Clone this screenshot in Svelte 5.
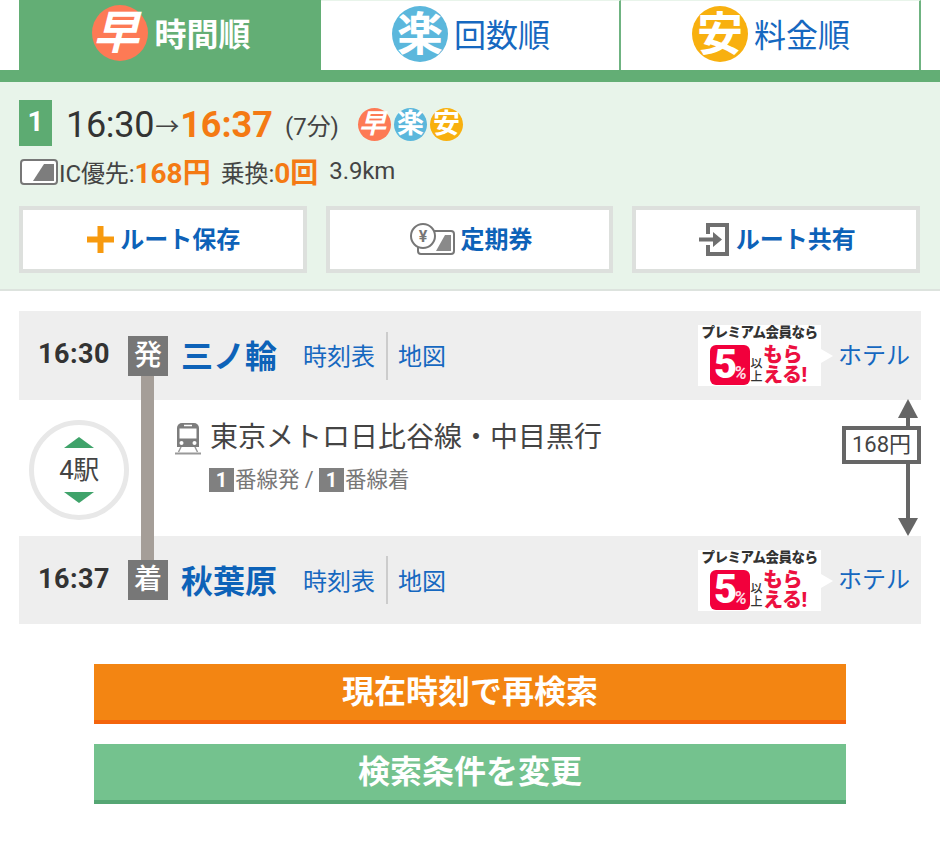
<script>
  const tabs = [
    { key: 'haya', g: '早', label: '時間順', on: true },
    { key: 'raku', g: '楽', label: '回数順' },
    { key: 'yasu', g: '安', label: '料金順' }
  ];
  const stops = [
    { time: '16:30', kind: '発', name: '三ノ輪' },
    { time: '16:37', kind: '着', name: '秋葉原' }
  ];
</script>

{#snippet ad()}
  <div class="ad">
    <div class="ad-top">プレミアム会員なら</div>
    <div class="ad-main">
      <span class="ad-five">5<small>%</small></span>
      <span class="ad-ijo">以<br />上</span>
      <span class="ad-red">もら<br />える!</span>
    </div>
  </div>
{/snippet}

{#snippet stop(s)}
  <div class="stop">
    <span class="stop-time">{s.time}</span>
    <span class="stop-kind">{s.kind}</span>
    <a class="stop-name">{s.name}</a>
    <a class="stop-link">時刻表</a>
    <span class="stop-div"></span>
    <a class="stop-link map">地図</a>
    <span class="stop-right">
      {@render ad()}
      <a class="stop-link hotel">ホテル</a>
    </span>
  </div>
{/snippet}

<div class="page">
  <div class="tabs">
    {#each tabs as t}
      <div class="tab" class:on={t.on}>
        <span class="coin big {t.key}"><span>{t.g}</span></span>
        <span class="tab-label">{t.label}</span>
      </div>
    {/each}
  </div>

  <section class="summary">
    <div class="row1">
      <span class="num">1</span>
      <span class="dep">16:30</span><span class="arrow">→</span><span class="arr">16:37</span>
      <span class="dur">(7分)</span>
      <span class="coins">
        {#each tabs as t}<span class="coin small {t.key}"><span>{t.g}</span></span>{/each}
      </span>
    </div>
    <div class="row2">
      <svg class="card" width="38" height="26" viewBox="0 0 38 26">
        <rect x="1" y="1" width="36" height="24" rx="3" fill="#fff" stroke="#777" stroke-width="2" />
        <path d="M13 22 L24 5 H34 V22 Z" fill="#7d7d7d" />
      </svg>
      <span class="lbl">IC優先:</span><b class="hi">168円</b>
      <span class="lbl transfer">乗換:</span><b class="hi">0回</b>
      <span class="lbl dist">3.9km</span>
    </div>
    <div class="actions">
      <button>
        <svg width="27" height="27" viewBox="0 0 27 27"><path d="M10.500 0h6v10.500h10.500v6H16.500v10.500h-6V16.500H0v-6h10.500z" fill="#f79a0f" /></svg>
        <span>ルート保存</span>
      </button>
      <button>
        <svg width="46" height="32" viewBox="0 0 46 32">
          <rect x="9" y="8" width="36" height="23" rx="3" fill="#fff" stroke="#777" stroke-width="2" />
          <path d="M27 28 L36 12 H42 V28 Z" fill="#8a8a8a" />
          <circle cx="14" cy="13" r="12" fill="#fff" stroke="#777" stroke-width="2" />
          <text x="14" y="19" class="yen">¥</text>
        </svg>
        <span>定期券</span>
      </button>
      <button>
        <svg width="31" height="33" viewBox="0 0 31 33">
          <path d="M7 0h23v33H7v-11h4v7h15V4h-15v7H7z" fill="#6f6f6f" />
          <path d="M0 14.500h14V9l9 7.500-9 7.500v-5.500H0z" fill="#6f6f6f" />
        </svg>
        <span>ルート共有</span>
      </button>
    </div>
  </section>

  <section class="route">
    <span class="track"></span>
    {@render stop(stops[0])}
    <div class="leg">
      <div class="count">
        <span class="tri up"></span>
        <span class="count-num">4駅</span>
        <span class="tri down"></span>
      </div>
      <div class="leg-info">
        <div class="line">
          <svg width="26" height="33" viewBox="0 0 26 33">
            <path d="M7 1h12a5 5 0 0 1 5 5v19H2V6a5 5 0 0 1 5-5z" fill="#7d7d7d" />
            <path d="M4.500 6.500h17v10h-17z" fill="#fff" />
            <path d="M9 3.500h8" stroke="#fff" stroke-width="1.500" />
            <circle cx="6.500" cy="21" r="2" fill="#fff" /><circle cx="19.500" cy="21" r="2" fill="#fff" />
            <path d="M6 25l-2.500 5M20 25l2.500 5" stroke="#999" stroke-width="1.500" />
            <path d="M0 31.500h26" stroke="#999" stroke-width="2" />
          </svg>
          <span>東京メトロ日比谷線・中目黒行</span>
        </div>
        <div class="plat">
          <span class="pnum">1</span>番線発 / <span class="pnum">1</span>番線着
        </div>
      </div>
      <div class="fare">
        <span class="head up"></span>
        <span class="shaft short"></span>
        <span class="fare-box">168円</span>
        <span class="shaft long"></span>
        <span class="head down"></span>
      </div>
    </div>
    {@render stop(stops[1])}
  </section>

  <div class="cta">
    <button class="orange">現在時刻で再検索</button>
    <button class="green">検索条件を変更</button>
  </div>
</div>

<style>
  :global(body) {
    margin: 0;
    background: #fff;
  }
  .page {
    width: 940px;
    font-family: Roboto, "Noto Sans CJK JP", sans-serif;
    color: #333;
  }
  button {
    font-family: inherit;
    cursor: pointer;
  }

  .tabs {
    display: flex;
    height: 70px;
    padding: 0 19px;
  }
  .tab {
    width: 300px;
    box-sizing: border-box;
    display: flex;
    align-items: center;
    justify-content: center;
    gap: 6px;
    padding: 0 0 4px 2px;
    font-size: 32px;
    color: #1668c0;
    background: #fff;
    border-top: 1px solid #e8f4ea;
    border-right: 2px solid #6fb381;
  }
  .tab.on {
    width: 302px;
    background: #63ae75;
    border: 0;
    color: #fff;
    font-weight: 700;
    padding-left: 3px;
  }
  .tab-label {
    margin-bottom: 2px;
  }
  .coin {
    display: inline-flex;
    align-items: center;
    justify-content: center;
    border-radius: 50%;
    color: #fff;
    font-weight: 700;
    flex: none;
  }
  .coin.big {
    width: 56px;
    height: 56px;
    font-size: 46px;
    line-height: 1;
  }
  .coin.small {
    width: 33px;
    height: 33px;
    font-size: 27px;
    line-height: 1;
  }
  .haya {
    background: #fd7a55;
  }
  .haya > span {
    display: block;
    transform: skewX(-14deg);
  }
  .raku {
    background: #5bb7dc;
  }
  .yasu {
    background: #f8b00f;
  }

  .summary {
    border-top: 12px solid #63ae75;
    border-bottom: 2px solid #dde3de;
    background: #e8f4ea;
    padding: 18px 20px 0 19px;
    height: 189px;
  }
  .row1 {
    display: flex;
    align-items: center;
    height: 46px;
  }
  .num {
    width: 33px;
    height: 46px;
    background: #5dab72;
    color: #fff;
    font-size: 28px;
    font-weight: 700;
    line-height: 44px;
    text-align: center;
    margin-right: 14px;
  }
  .dep {
    font-size: 36px;
    letter-spacing: -0.3px;
    margin-top: 3px;
  }
  .arrow {
    font-size: 24px;
    color: #444;
    width: 26px;
    text-align: center;
    margin-top: 3px;
  }
  .arr {
    font-size: 36px;
    font-weight: 700;
    color: #f47a14;
    margin-top: 3px;
  }
  .dur {
    font-size: 24px;
    margin: 3px 0 0 12px;
    width: 73px;
    color: #444;
  }
  .coins {
    display: flex;
    gap: 3px;
    margin-top: 2px;
  }
  .row2 {
    display: flex;
    align-items: center;
    height: 36px;
    margin-top: 7px;
    font-size: 24px;
    color: #444;
  }
  .card {
    margin: 1px 1px 0 1px;
  }
  .lbl {
    letter-spacing: -0.1px;
  }
  .hi {
    font-size: 28px;
    color: #f47a14;
    margin: -1px 0 0 0;
  }
  .transfer {
    margin-left: 10px;
  }
  .dist {
    margin-left: 11px;
  }
  .actions {
    display: flex;
    gap: 19px;
    margin-top: 17px;
  }
  .actions button {
    width: 288px;
    height: 67px;
    box-sizing: border-box;
    border: 4px solid #dde0dd;
    background: #fff;
    color: #0d62b8;
    font-size: 24px;
    font-weight: 700;
    display: flex;
    align-items: center;
    justify-content: center;
    gap: 6px;
    padding: 0 0 0 2px;
  }
  .actions button span {
    margin-bottom: 5px;
  }
  .actions svg {
    margin-bottom: 1px;
  }
  .yen {
    font-size: 16px;
    font-weight: 700;
    fill: #777;
    text-anchor: middle;
  }

  .route {
    position: relative;
    margin: 20px 19px 0;
    width: 902px;
  }
  .track {
    position: absolute;
    left: 122px;
    top: 60px;
    width: 13px;
    height: 190px;
    background: #a59e98;
  }
  .stop {
    height: 89px;
    background: #eee;
    display: flex;
    align-items: center;
    padding: 0 11px 0 19px;
    box-sizing: border-box;
  }
  .stop:last-child {
    height: 88px;
  }
  .stop-time {
    width: 90px;
    font-size: 27px;
    font-weight: 700;
    letter-spacing: 0.5px;
    flex: none;
    margin-bottom: 3px;
  }
  .stop-kind {
    position: relative;
    width: 40px;
    height: 40px;
    background: #777;
    color: #fff;
    font-size: 28px;
    font-weight: 500;
    line-height: 40px;
    text-align: center;
    flex: none;
    margin-right: 13px;
  }
  .stop-name {
    font-size: 32px;
    font-weight: 700;
    color: #0d62b8;
    width: 122px;
    flex: none;
    margin-bottom: 3px;
  }
  .stop-link {
    font-size: 24px;
    color: #1668c0;
    flex: none;
    margin-bottom: 2px;
  }
  .stop-div {
    width: 2px;
    height: 48px;
    background: #ccc;
    margin: 0 10px 0 11px;
    flex: none;
  }
  .stop-right {
    margin-left: auto;
    display: flex;
    align-items: center;
  }
  .hotel {
    margin: 0 0 5px 18px;
  }
  .ad {
    position: relative;
    width: 123px;
    height: 61px;
    background: #fff;
    color: #333;
    line-height: 1;
    left: 1px;
  }
  .ad::after {
    content: "";
    position: absolute;
    left: 100%;
    top: 24px;
    border-left: 12px solid #fff;
    border-top: 7px solid transparent;
    border-bottom: 7px solid transparent;
  }
  .ad-top {
    font-size: 13.500px;
    font-weight: 900;
    text-align: center;
    white-space: nowrap;
    letter-spacing: -0.5px;
    padding-top: 1px;
    height: 20px;
    box-sizing: border-box;
    color: #333;
  }
  .ad-main {
    display: flex;
    padding-left: 12px;
    height: 41px;
  }
  .ad-five {
    position: relative;
    width: 40px;
    height: 40px;
    flex: none;
    background: #f2003c;
    border-radius: 6px;
    color: #fff;
    font-size: 40px;
    font-weight: 900;
    font-family: Roboto, sans-serif;
    line-height: 40px;
    padding-left: 4px;
    box-sizing: border-box;
    white-space: nowrap;
  }
  .ad-five small {
    position: absolute;
    left: 24px;
    bottom: 3px;
    font-size: 18px;
    line-height: 18px;
    color: #ffd9e2;
    font-weight: 700;
    font-style: italic;
  }
  .ad-ijo {
    font-size: 12px;
    line-height: 13px;
    padding-top: 13px;
    width: 13px;
    flex: none;
    text-align: center;
    font-weight: 500;
  }
  .ad-red {
    font-size: 20px;
    line-height: 20px;
    font-weight: 900;
    color: #ec1040;
    white-space: nowrap;
    letter-spacing: -0.5px;
  }

  .leg {
    height: 136px;
    display: flex;
    background: #fff;
  }
  .count {
    width: 100px;
    height: 100px;
    margin: 20px 0 0 10px;
    box-sizing: border-box;
    border: 5px solid #e8e8e8;
    border-radius: 50%;
    display: flex;
    flex-direction: column;
    align-items: center;
    justify-content: center;
    gap: 9px;
    flex: none;
  }
  .count-num {
    font-size: 26px;
    line-height: 26px;
    letter-spacing: -0.5px;
    color: #444;
  }
  .tri {
    width: 0;
    height: 0;
    border-left: 15px solid transparent;
    border-right: 15px solid transparent;
  }
  .tri.up {
    border-bottom: 11px solid #3fa36a;
  }
  .tri.down {
    border-top: 11px solid #3fa36a;
  }
  .leg-info {
    margin-left: 46px;
    padding-top: 20px;
    flex: 1;
  }
  .line {
    display: flex;
    align-items: center;
    gap: 9px;
    font-size: 28px;
    line-height: 36px;
    color: #444;
  }
  .plat {
    display: flex;
    align-items: center;
    margin: 11px 0 0 34px;
    font-size: 21.500px;
    color: #777;
    white-space: pre;
    line-height: 25px;
  }
  .pnum {
    width: 25px;
    height: 24px;
    background: #808080;
    color: #fff;
    font-weight: 700;
    font-size: 20px;
    line-height: 24px;
    text-align: center;
    margin-right: 1px;
  }
  .fare {
    width: 79px;
    flex: none;
    display: flex;
    flex-direction: column;
    align-items: flex-end;
  }
  .head {
    width: 0;
    height: 0;
    border-left: 10px solid transparent;
    border-right: 10px solid transparent;
    margin-right: 3px;
    flex: none;
  }
  .head.up {
    border-bottom: 19px solid #666;
    margin-top: -1px;
  }
  .head.down {
    border-top: 18px solid #666;
  }
  .shaft {
    width: 4px;
    background: #666;
    margin-right: 11px;
  }
  .shaft.short {
    height: 8px;
  }
  .shaft.long {
    flex: 1;
  }
  .fare-box {
    box-sizing: border-box;
    width: 79px;
    height: 38px;
    border: 4px solid #666;
    background: #fff;
    font-size: 22px;
    line-height: 30px;
    text-align: center;
    color: #444;
  }

  .cta {
    display: flex;
    flex-direction: column;
    align-items: center;
    gap: 20px;
    margin-top: 40px;
    padding-bottom: 48px;
  }
  .cta button {
    width: 752px;
    height: 60px;
    box-sizing: border-box;
    border: 0;
    border-bottom: 4px solid;
    color: #fff;
    font-size: 32px;
    font-weight: 700;
    padding: 0;
    line-height: 1;
  }
  .cta .orange {
    background: #f38512;
    border-color: #f4640c;
  }
  .cta .green {
    background: #74c28e;
    border-color: #55a673;
  }
</style>
